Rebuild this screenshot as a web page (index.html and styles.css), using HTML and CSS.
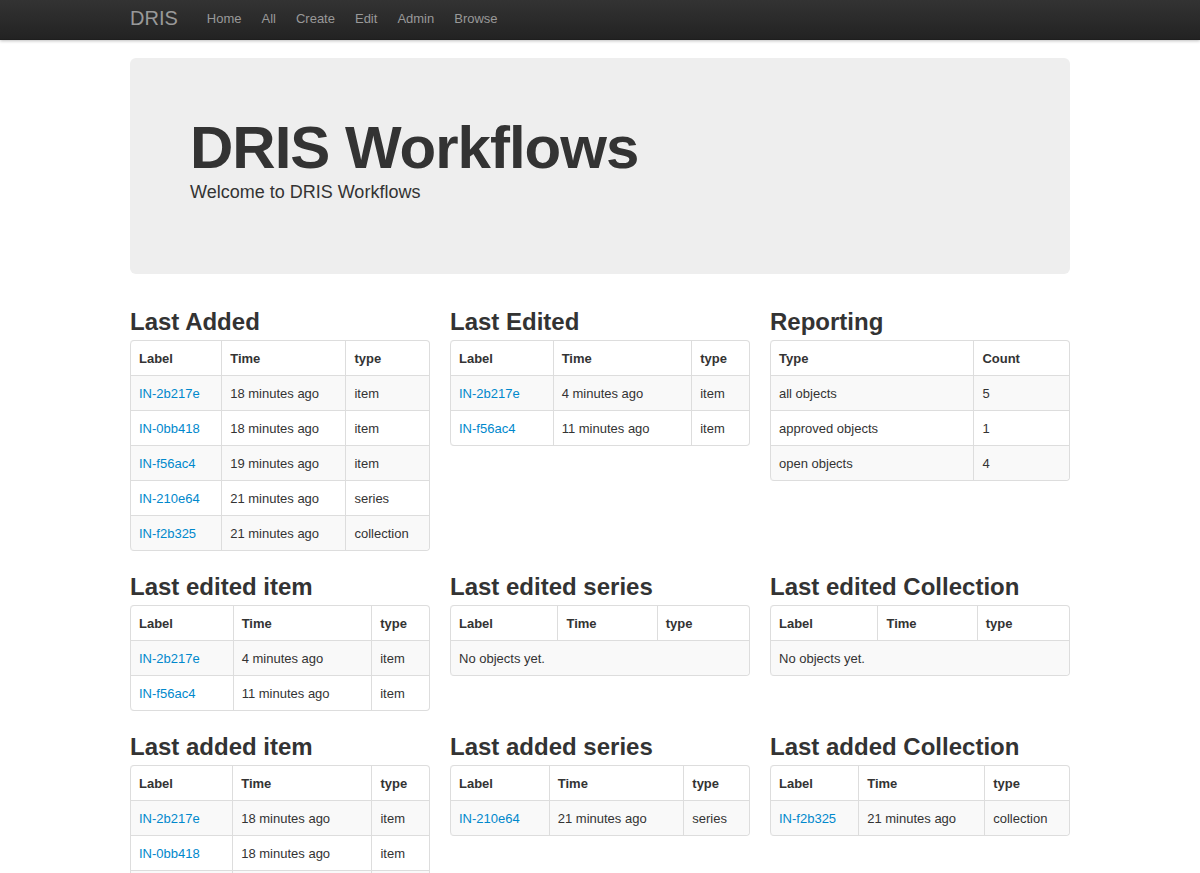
FILE: index.html
```html
<!DOCTYPE html>
<html>
<head>
<meta charset="utf-8">
<title>DRIS Workflows</title>
<link rel="stylesheet" href="styles.css">
</head>
<body>
<div class="navbar">
  <div class="container nav-inner">
    <a class="brand" href="#">DRIS</a>
    <ul class="nav">
      <li><a href="#">Home</a></li>
      <li><a href="#">All</a></li>
      <li><a href="#">Create</a></li>
      <li><a href="#">Edit</a></li>
      <li><a href="#">Admin</a></li>
      <li><a href="#">Browse</a></li>
    </ul>
  </div>
</div>
<div class="container main">
  <div class="hero">
    <h1>DRIS Workflows</h1>
    <p>Welcome to DRIS Workflows</p>
  </div>
  <div class="grid">
    <div class="col">
      <h3>Last Added</h3>
      <table class="tbl">
        <thead><tr><th>Label</th><th>Time</th><th>type</th></tr></thead>
        <tbody>
          <tr><td><a href="#">IN-2b217e</a></td><td>18 minutes ago</td><td>item</td></tr>
          <tr><td><a href="#">IN-0bb418</a></td><td>18 minutes ago</td><td>item</td></tr>
          <tr><td><a href="#">IN-f56ac4</a></td><td>19 minutes ago</td><td>item</td></tr>
          <tr><td><a href="#">IN-210e64</a></td><td>21 minutes ago</td><td>series</td></tr>
          <tr><td><a href="#">IN-f2b325</a></td><td>21 minutes ago</td><td>collection</td></tr>
        </tbody>
      </table>
    </div>
    <div class="col">
      <h3>Last Edited</h3>
      <table class="tbl">
        <thead><tr><th>Label</th><th>Time</th><th>type</th></tr></thead>
        <tbody>
          <tr><td><a href="#">IN-2b217e</a></td><td>4 minutes ago</td><td>item</td></tr>
          <tr><td><a href="#">IN-f56ac4</a></td><td>11 minutes ago</td><td>item</td></tr>
        </tbody>
      </table>
    </div>
    <div class="col">
      <h3>Reporting</h3>
      <table class="tbl">
        <thead><tr><th>Type</th><th>Count</th></tr></thead>
        <tbody>
          <tr><td>all objects</td><td>5</td></tr>
          <tr><td>approved objects</td><td>1</td></tr>
          <tr><td>open objects</td><td>4</td></tr>
        </tbody>
      </table>
    </div>

    <div class="col">
      <h3>Last edited item</h3>
      <table class="tbl">
        <thead><tr><th>Label</th><th>Time</th><th>type</th></tr></thead>
        <tbody>
          <tr><td><a href="#">IN-2b217e</a></td><td>4 minutes ago</td><td>item</td></tr>
          <tr><td><a href="#">IN-f56ac4</a></td><td>11 minutes ago</td><td>item</td></tr>
        </tbody>
      </table>
    </div>
    <div class="col">
      <h3>Last edited series</h3>
      <table class="tbl">
        <thead><tr><th>Label</th><th>Time</th><th>type</th></tr></thead>
        <tbody>
          <tr><td colspan="3">No objects yet.</td></tr>
        </tbody>
      </table>
    </div>
    <div class="col">
      <h3>Last edited Collection</h3>
      <table class="tbl">
        <thead><tr><th>Label</th><th>Time</th><th>type</th></tr></thead>
        <tbody>
          <tr><td colspan="3">No objects yet.</td></tr>
        </tbody>
      </table>
    </div>

    <div class="col">
      <h3>Last added item</h3>
      <table class="tbl">
        <thead><tr><th>Label</th><th>Time</th><th>type</th></tr></thead>
        <tbody>
          <tr><td><a href="#">IN-2b217e</a></td><td>18 minutes ago</td><td>item</td></tr>
          <tr><td><a href="#">IN-0bb418</a></td><td>18 minutes ago</td><td>item</td></tr>
          <tr><td><a href="#">IN-f56ac4</a></td><td>19 minutes ago</td><td>item</td></tr>
        </tbody>
      </table>
    </div>
    <div class="col">
      <h3>Last added series</h3>
      <table class="tbl">
        <thead><tr><th>Label</th><th>Time</th><th>type</th></tr></thead>
        <tbody>
          <tr><td><a href="#">IN-210e64</a></td><td>21 minutes ago</td><td>series</td></tr>
        </tbody>
      </table>
    </div>
    <div class="col">
      <h3>Last added Collection</h3>
      <table class="tbl">
        <thead><tr><th>Label</th><th>Time</th><th>type</th></tr></thead>
        <tbody>
          <tr><td><a href="#">IN-f2b325</a></td><td>21 minutes ago</td><td>collection</td></tr>
        </tbody>
      </table>
    </div>
  </div>
</div>
</body>
</html>
```

FILE: styles.css
```css
* { box-sizing: content-box; }
html, body { margin: 0; padding: 0; }
body {
  font-family: "Liberation Sans", Arial, Helvetica, sans-serif;
  font-size: 13px;
  line-height: 18px;
  color: #333;
  background: #fff;
}
a { color: #0088cc; text-decoration: none; }

.navbar {
  height: 40px;
  background-color: #222;
  background-image: linear-gradient(to bottom, #333333, #222222);
  box-shadow: 0 1px 3px rgba(0,0,0,0.25), inset 0 -1px 0 rgba(0,0,0,0.1);
}
.container { width: 940px; margin: 0 auto; }
.nav-inner { display: flex; align-items: flex-start; }
.brand {
  display: block;
  padding: 8px 20px 12px;
  margin-left: -20px;
  font-size: 20px;
  line-height: 20px;
  color: #999;
}
.nav { display: flex; list-style: none; margin: 0 0 0 -1px; padding: 0; }
.nav a {
  display: block;
  padding: 9px 10px 12px;
  line-height: 19px;
  color: #999;
}

.main { padding-top: 18px; }
.hero {
  background: #eee;
  border-radius: 6px;
  padding: 60px 60px 61px;
  margin-bottom: 30px;
}
.hero h1 {
  margin: 0;
  font-size: 60px;
  line-height: 60px;
  letter-spacing: -1px;
  font-weight: bold;
  color: #333;
}
.hero p {
  margin: -1px 0 6px;
  font-size: 18px;
  line-height: 30px;
  font-weight: 200;
}

.grid {
  display: grid;
  grid-template-columns: 300px 300px 300px;
  column-gap: 20px;
  align-items: start;
}
.col h3 {
  margin: 0;
  font-size: 24px;
  line-height: 36px;
  font-weight: bold;
  color: #333;
}
.tbl {
  box-sizing: border-box;
  width: 300px;
  margin-bottom: 18px;
  border: 1px solid #ddd;
  border-left: 0;
  border-collapse: separate;
  border-spacing: 0;
  border-radius: 4px;
}
.tbl th, .tbl td {
  padding: 9px 8px 7px;
  line-height: 18px;
  text-align: left;
  vertical-align: top;
  border-left: 1px solid #ddd;
}
.tbl th { font-weight: bold; vertical-align: bottom; }
.tbl td { border-top: 1px solid #ddd; }
.tbl tbody tr:nth-child(odd) td { background: #f9f9f9; }
.tbl thead tr:first-child th:first-child { border-top-left-radius: 4px; }
.tbl thead tr:first-child th:last-child { border-top-right-radius: 4px; }
.tbl tbody tr:last-child td:first-child { border-bottom-left-radius: 4px; }
.tbl tbody tr:last-child td:last-child { border-bottom-right-radius: 4px; }
```
